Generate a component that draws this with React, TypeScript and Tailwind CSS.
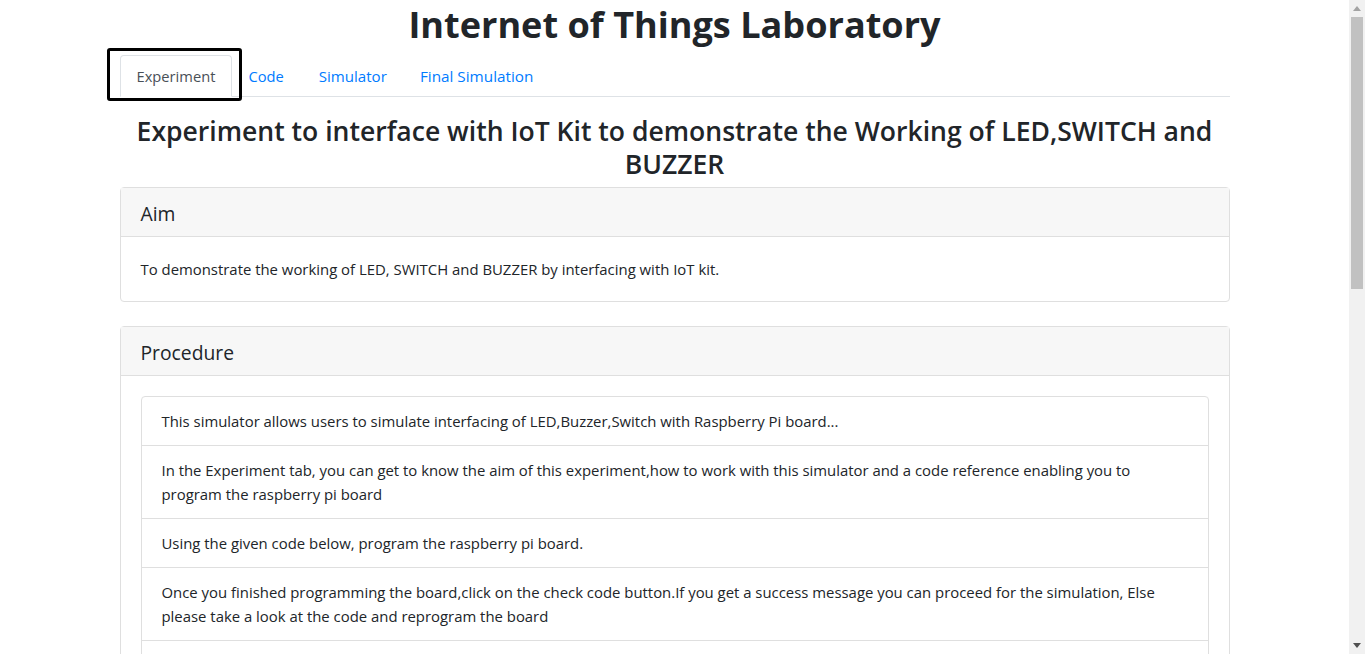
import React from "react";

const items = [
  "This simulator allows users to simulate interfacing of LED,Buzzer,Switch with Raspberry Pi board...",
  "In the Experiment tab, you can get to know the aim of this experiment,how to work with this simulator and a code reference enabling you to program the raspberry pi board",
  "Using the given code below, program the raspberry pi board.",
  "Once you finished programming the board,click on the check code button.If you get a success message you can proceed for the simulation, Else please take a look at the code and reprogram the board",
  "After the successful check of the code, go to the Simulator tab and connect the components as described in the instructions.",
  "Finally go to the Final Simulation tab to see the output.",
];

export default function App() {
  return (
    <div
      className="flex h-[654px] w-full overflow-hidden bg-white text-[#212529]"
      style={{ fontFamily: '"Open Sans", "Noto Sans", sans-serif' }}
    >
      <div className="flex-1 overflow-hidden">
        <div className="mx-auto w-[1140px] px-[15px]">
          <h1 className="pt-[2px] text-center text-[36.1px] font-bold leading-[44px] text-[#212529]">
            Internet of Things Laboratory
          </h1>
          <ul className="mt-[9px] flex border-b border-[#dee2e6] text-[14.7px] leading-6">
            <li className="relative -mb-px">
              <div className="rounded-t-[4px] border border-[#dee2e6] border-b-white bg-white px-4 py-2 text-[#495057]">
                Experiment
              </div>
              <div className="pointer-events-none absolute -left-[13px] -right-[10px] -top-[7px] -bottom-[4px] rounded-[3px] border-[3px] border-black" />
            </li>
            <li className="pl-4 pr-[17px] pt-[9px] pb-[7px] text-[#007bff]">Code</li>
            <li className="pl-[18px] pr-[17px] pt-[9px] pb-[7px] text-[15.1px] text-[#007bff]">Simulator</li>
            <li className="px-4 pt-[9px] pb-[7px] text-[15.3px] text-[#007bff]">Final Simulation</li>
          </ul>

          <h3 className="mt-[18px] px-2 text-center text-[26.55px] font-semibold leading-[33px] text-[#212529]">
            Experiment to interface with IoT Kit to demonstrate the Working of LED,SWITCH and BUZZER
          </h3>

          <div className="mt-[6px] rounded-[4px] border border-[#dfdfdf]">
            <div className="border-b border-[#dfdfdf] bg-[#f7f7f7] px-5 pt-[14px] pb-[10px]">
              <h5 className="text-[19.3px] font-medium leading-6">Aim</h5>
            </div>
            <div className="p-5 text-[14.9px] leading-6">
              To demonstrate the working of LED, SWITCH and BUZZER by interfacing with IoT kit.
            </div>
          </div>

          <div className="mt-6 rounded-[4px] border border-[#dfdfdf]">
            <div className="border-b border-[#dfdfdf] bg-[#f7f7f7] px-5 pt-[14px] pb-[10px]">
              <h5 className="text-[19.3px] font-medium leading-6">Procedure</h5>
            </div>
            <div className="p-5">
              <ul className="rounded-[4px] border border-[#dfdfdf] text-[14.9px] leading-6">
                {items.map((t, i) => (
                  <li
                    key={i}
                    className={`px-5 py-3 ${i > 0 ? "border-t border-[#dfdfdf]" : ""}`}
                  >
                    {t}
                  </li>
                ))}
              </ul>
            </div>
          </div>
        </div>
      </div>

      <div className="flex w-[16px] shrink-0 flex-col bg-[#f1f1f1]">
        <div className="flex h-[17px] items-center justify-center">
          <svg width="8" height="5" viewBox="0 0 8 5">
            <polygon points="4,0 8,5 0,5" fill="#a3a3a3" />
          </svg>
        </div>
        <div className="mx-[2px] h-[272px] bg-[#c1c1c1]" />
        <div className="flex-1" />
        <div className="flex h-[17px] items-center justify-center">
          <svg width="8" height="5" viewBox="0 0 8 5">
            <polygon points="0,0 8,0 4,5" fill="#505050" />
          </svg>
        </div>
      </div>
    </div>
  );
}
